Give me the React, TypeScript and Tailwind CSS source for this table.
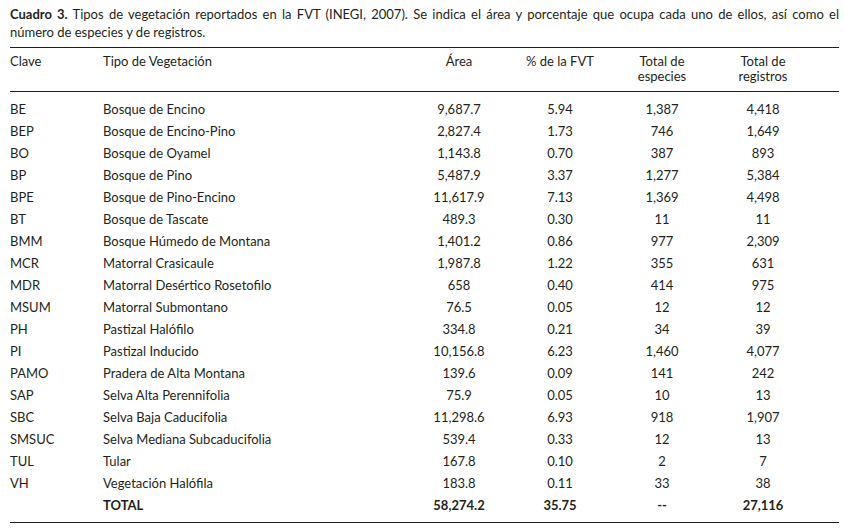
const rows = [
  ["BE", "Bosque de Encino", "9,687.7", "5.94", "1,387", "4,418"],
  ["BEP", "Bosque de Encino-Pino", "2,827.4", "1.73", "746", "1,649"],
  ["BO", "Bosque de Oyamel", "1,143.8", "0.70", "387", "893"],
  ["BP", "Bosque de Pino", "5,487.9", "3.37", "1,277", "5,384"],
  ["BPE", "Bosque de Pino-Encino", "11,617.9", "7.13", "1,369", "4,498"],
  ["BT", "Bosque de Tascate", "489.3", "0.30", "11", "11"],
  ["BMM", "Bosque Húmedo de Montana", "1,401.2", "0.86", "977", "2,309"],
  ["MCR", "Matorral Crasicaule", "1,987.8", "1.22", "355", "631"],
  ["MDR", "Matorral Desértico Rosetofilo", "658", "0.40", "414", "975"],
  ["MSUM", "Matorral Submontano", "76.5", "0.05", "12", "12"],
  ["PH", "Pastizal Halófilo", "334.8", "0.21", "34", "39"],
  ["PI", "Pastizal Inducido", "10,156.8", "6.23", "1,460", "4,077"],
  ["PAMO", "Pradera de Alta Montana", "139.6", "0.09", "141", "242"],
  ["SAP", "Selva Alta Perennifolia", "75.9", "0.05", "10", "13"],
  ["SBC", "Selva Baja Caducifolia", "11,298.6", "6.93", "918", "1,907"],
  ["SMSUC", "Selva Mediana Subcaducifolia", "539.4", "0.33", "12", "13"],
  ["TUL", "Tular", "167.8", "0.10", "2", "7"],
  ["VH", "Vegetación Halófila", "183.8", "0.11", "33", "38"],
]

const cols = "grid grid-cols-[93px_306px_100px_102px_102px_100px_26px]"

export default function App() {
  return (
    <div className="w-[844px] h-[531px] bg-white text-[#231f20] text-[13px] font-['Lato',sans-serif] px-[10px] pt-[5px] overflow-hidden">
      <div className="w-[829px] leading-[18px]">
        <p className="text-justify [text-align-last:justify] whitespace-nowrap">
          <span className="font-bold">Cuadro 3.</span> Tipos de vegetación reportados en la FVT (INEGI, 2007). Se
          indica el área y porcentaje que ocupa cada uno de ellos, así como el
        </p>
        <p>número de especies y de registros.</p>
      </div>

      <div className="mt-[6px] w-[829px] border-t border-[#231f20]">
        <div className={`${cols} leading-[15px] pt-[6px] pb-[7px] border-b border-[#231f20]`}>
          <div>Clave</div>
          <div>Tipo de Vegetación</div>
          <div className="text-center">Área</div>
          <div className="text-center">% de la FVT</div>
          <div className="text-center">
            Total de
            <br />
            especies
          </div>
          <div className="text-center">
            Total de
            <br />
            registros
          </div>
          <div />
        </div>

        <div className="pt-[6px] pb-[6px] border-b border-[#231f20] leading-[22px]">
          {rows.map((r) => (
            <div key={r[0]} className={cols}>
              <div>{r[0]}</div>
              <div>{r[1]}</div>
              <div className="text-center">{r[2]}</div>
              <div className="text-center">{r[3]}</div>
              <div className="text-center">{r[4]}</div>
              <div className="text-center">{r[5]}</div>
              <div />
            </div>
          ))}
          <div className={`${cols} font-bold`}>
            <div />
            <div>TOTAL</div>
            <div className="text-center">58,274.2</div>
            <div className="text-center">35.75</div>
            <div className="text-center">--</div>
            <div className="text-center">27,116</div>
            <div />
          </div>
        </div>
      </div>
    </div>
  )
}
